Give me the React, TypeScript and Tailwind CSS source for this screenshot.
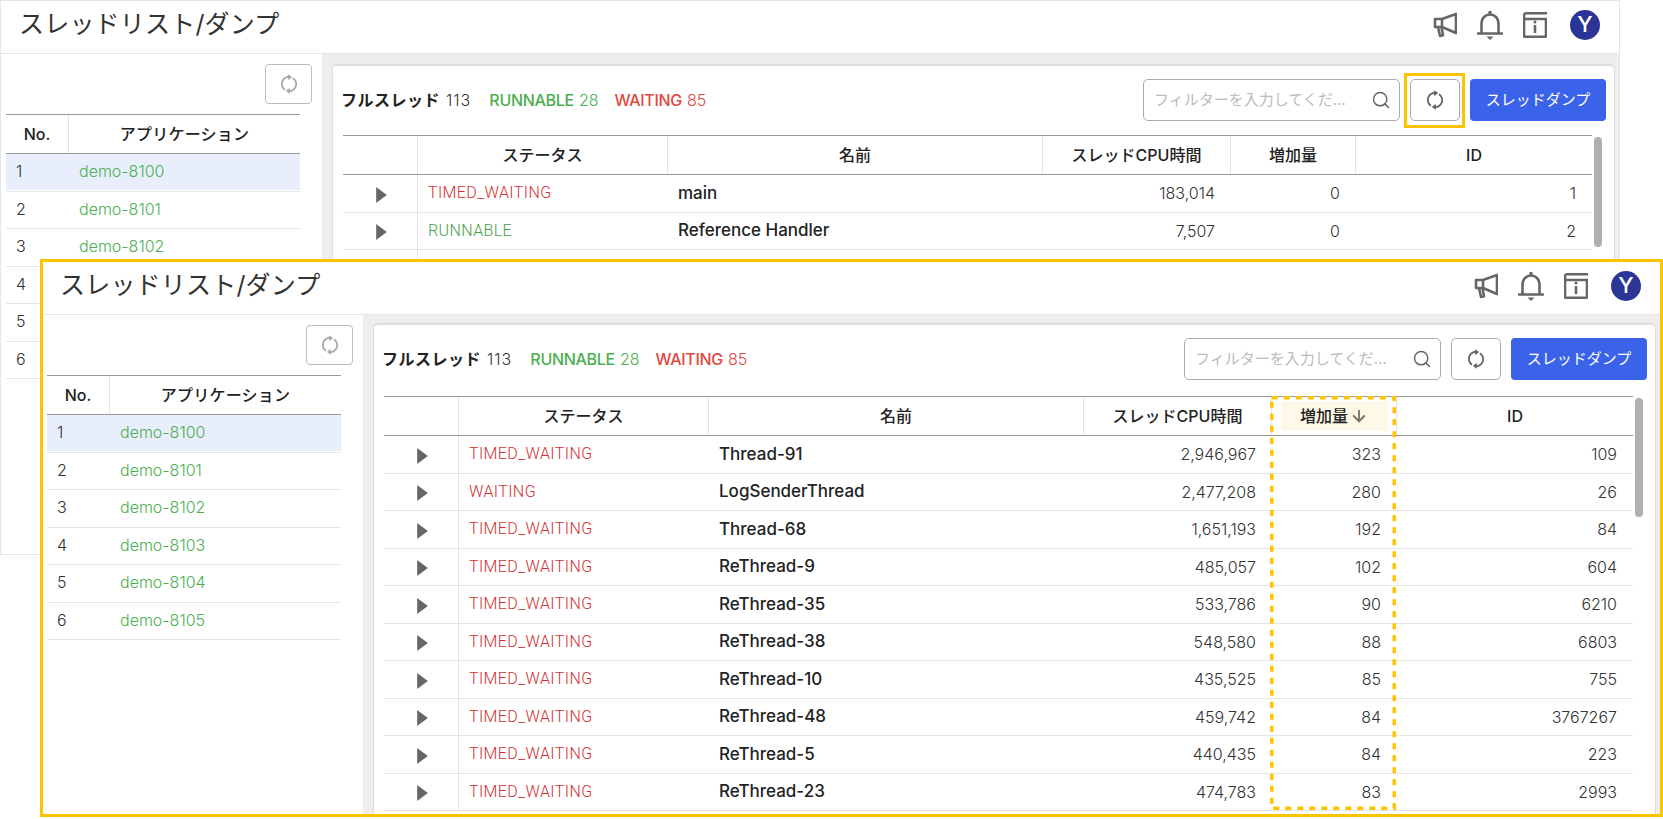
import { ArrowDown, Search } from 'lucide-react';

const FONT = "font-['Inter','Noto_Sans_CJK_JP',sans-serif]";

type Row = { status: string; name: string; cpu: string; delta: string; id: string };

const backRows: Row[] = [
  { status: 'TIMED_WAITING', name: 'main', cpu: '183,014', delta: '0', id: '1' },
  { status: 'RUNNABLE', name: 'Reference Handler', cpu: '7,507', delta: '0', id: '2' },
  { status: '', name: '', cpu: '', delta: '', id: '' },
];

const frontRows: Row[] = [
  { status: 'TIMED_WAITING', name: 'Thread-91', cpu: '2,946,967', delta: '323', id: '109' },
  { status: 'WAITING', name: 'LogSenderThread', cpu: '2,477,208', delta: '280', id: '26' },
  { status: 'TIMED_WAITING', name: 'Thread-68', cpu: '1,651,193', delta: '192', id: '84' },
  { status: 'TIMED_WAITING', name: 'ReThread-9', cpu: '485,057', delta: '102', id: '604' },
  { status: 'TIMED_WAITING', name: 'ReThread-35', cpu: '533,786', delta: '90', id: '6210' },
  { status: 'TIMED_WAITING', name: 'ReThread-38', cpu: '548,580', delta: '88', id: '6803' },
  { status: 'TIMED_WAITING', name: 'ReThread-10', cpu: '435,525', delta: '85', id: '755' },
  { status: 'TIMED_WAITING', name: 'ReThread-48', cpu: '459,742', delta: '84', id: '3767267' },
  { status: 'TIMED_WAITING', name: 'ReThread-5', cpu: '440,435', delta: '84', id: '223' },
  { status: 'TIMED_WAITING', name: 'ReThread-23', cpu: '474,783', delta: '83', id: '2993' },
];

const apps = ['demo-8100', 'demo-8101', 'demo-8102', 'demo-8103', 'demo-8104', 'demo-8105'];

function RefreshIcon({ className }: { className: string }) {
  return (
    <svg viewBox="0 0 24 24" fill="none" stroke="currentColor" strokeWidth="2.2" className={className}>
      <path d="M14.5 3.8A8.5 8.5 0 0 0 7.2 19" />
      <path d="M9.5 20.2A8.5 8.5 0 0 0 16.8 5" />
      <path d="M11.5 1l3.5 2.8-3.5 2.8z" fill="currentColor" strokeWidth="1" />
      <path d="M12.5 23L9 20.2l3.5-2.8z" fill="currentColor" strokeWidth="1" />
    </svg>
  );
}

function HeaderIcons() {
  return (
    <div className="flex items-center gap-[20px] text-[#666]">
      <svg viewBox="0 0 24 26" fill="none" stroke="currentColor" strokeWidth="2.6" className="w-[24px] h-[26px]">
        <path d="M23 2v19L9 15H2V7h7z" strokeLinejoin="round" />
        <path d="M9 7v8M5 15l2 9 3-.8-1.5-8" strokeLinejoin="round" />
      </svg>
      <svg viewBox="0 0 26 30" className="w-[26px] h-[30px]" fill="none" stroke="currentColor" strokeWidth="2.6">
        <path d="M1 23.5h24" strokeLinecap="round" />
        <path d="M4.5 23.5V13a8.500 8.500 0 0 1 17 0v10.500" />
        <circle cx="13" cy="2.500" r="1.800" fill="currentColor" stroke="none" />
        <path d="M9.500 26.500h7L13 30z" fill="currentColor" stroke="none" />
      </svg>
      <svg viewBox="0 0 24 26" fill="none" stroke="currentColor" strokeWidth="2.6" className="w-[24px] h-[26px]">
        <path d="M24 1.300H3a2 2 0 0 0-2 2v20.500a1 1 0 0 0 1 1h20a1 1 0 0 0 1-1V7H1" />
        <path d="M12 13v8" strokeWidth="2.600" />
        <circle cx="12" cy="10" r="1.500" fill="currentColor" stroke="none" />
      </svg>
      <div className="ml-[3px] w-[30px] h-[30px] rounded-full bg-[#2b3595] text-white flex items-center justify-center text-[22px] font-medium">
        Y
      </div>
    </div>
  );
}

function Sidebar() {
  return (
    <div className="w-[321px] shrink-0 bg-white pl-[5px]">
      <div className="flex justify-end pt-[10px] pr-[10px]">
        <button className="w-[47px] h-[40px] border border-[#bbb] rounded-[4px] flex items-center justify-center text-[#aaa]">
          <RefreshIcon className="w-[20px] h-[20px]" />
        </button>
      </div>
      <div className="w-[294px] mt-[10px]">
        <div className="grid grid-cols-[63px_231px] h-[40px] border-y border-[#999] text-[16px] font-medium text-[#222]">
          <div className="flex items-center justify-center border-r border-[#e5e5e5]">No.</div>
          <div className="flex items-center justify-center tracking-[0.2px]">アプリケーション</div>
        </div>
        {apps.map((app, i) => (
          <div key={app} className="h-[37.5px] border-b border-[#e5e5e5] text-[16px] font-light">
            <div className={`grid grid-cols-[63px_231px] items-center h-[36px] pb-[2px] ${i === 0 ? 'bg-[#e8eefb]' : ''}`}>
              <div className="pl-[10px] text-[#333]">{i + 1}</div>
              <div className="pl-[10px] text-[#4caf50]">{app}</div>
            </div>
          </div>
        ))}
      </div>
    </div>
  );
}

function ThreadTable({ rows, sorted }: { rows: Row[]; sorted: boolean }) {
  return (
    <div className={`flex items-start pl-[2px] ${sorted ? 'pt-[16px]' : 'pt-[14px]'}`}>
      <div className="w-[1249px] shrink-0">
        <div className="grid grid-cols-[75px_250px_375px_188px_125px_236px] h-[40px] border-y border-[#999] text-[16px] font-medium text-[#222]">
          <div className="border-r border-[#e5e5e5]" />
          <div className="flex items-center justify-center border-r border-[#e5e5e5]">ステータス</div>
          <div className="flex items-center justify-center border-r border-[#e5e5e5]">名前</div>
          <div className="flex items-center justify-center border-r border-[#e5e5e5]">スレッドCPU時間</div>
          <div className="flex items-center justify-center border-r border-[#e5e5e5]">
            {sorted ? (
              <div className="w-[107px] h-[30px] bg-[#fdf8e7] flex items-center justify-center gap-[2px]">
                増加量
                <ArrowDown className="w-[18px] h-[18px] text-[#776f5f]" strokeWidth={2.4} />
              </div>
            ) : (
              '増加量'
            )}
          </div>
          <div className="flex items-center justify-center">ID</div>
        </div>
        {rows.map((row, i) => (
          <div
            key={i}
            className="grid grid-cols-[75px_250px_375px_188px_125px_236px] items-center h-[37.5px] border-b border-[#e5e5e5] text-[16px] font-light text-[#333]"
          >
            <div className="h-full border-r border-[#e5e5e5] flex items-center justify-center pl-[2px]">
              {row.status && (
                <svg viewBox="0 0 10 15" className="mt-[3px] w-[11px] h-[16px] fill-[#666]">
                  <path d="M0 0l10 7.500L0 15z" />
                </svg>
              )}
            </div>
            <div
              className={`pl-[10px] tracking-[0.4px] font-['Roboto','Noto_Sans_CJK_JP',sans-serif] ${row.status === 'RUNNABLE' ? 'text-[#43a047]' : 'text-[#d32f2f]'}`}
            >
              {row.status}
            </div>
            <div className="pl-[10px] text-[17px] font-medium text-[#222]">{row.name}</div>
            <div className="pr-[16px] text-right">{row.cpu}</div>
            <div className="pr-[16px] text-right">{row.delta}</div>
            <div className="pr-[16px] text-right">{row.id}</div>
          </div>
        ))}
      </div>
      <div className={`ml-[2px] mt-[2px] w-[8px] rounded-full bg-[#b0b0b0] ${sorted ? 'h-[119px]' : 'h-[110px]'}`} />
    </div>
  );
}

function ThreadPage({ rows, sorted }: { rows: Row[]; sorted: boolean }) {
  return (
    <div className="w-[1620px] h-[555px] shrink-0 border border-[#e5e5e5] bg-white flex flex-col overflow-hidden">
      <div className="h-[53px] shrink-0 border-b border-[#e5e5e5] flex items-center justify-between pl-[18px] pr-[19px] pb-[5px]">
        <h1 className="text-[25px] tracking-[0.2px] font-normal text-[#333]">スレッドリスト/ダンプ</h1>
        <HeaderIcons />
      </div>
      <div className="flex flex-1 min-h-0">
        <Sidebar />
        <div className={`flex-1 min-w-0 bg-[#eee] pl-[10px] pr-[4px] ${sorted ? 'pt-[8px]' : 'pt-[10px]'}`}>
          <div className="h-full bg-white border border-[#ddd] border-t-2 rounded-t-[5px] pl-[8px] pr-[8px] pt-[13px]">
            <div className="flex items-center h-[42px] text-[16px]">
              <span className="font-bold tracking-[0.5px] text-[#222]">フルスレッド</span>
              <span className="ml-[6px] font-light tracking-[1px] text-[#333]">113</span>
              <span className="ml-[18px] font-medium tracking-[-0.3px] text-[#4caf50]">RUNNABLE</span>
              <span className="ml-[5px] font-light text-[#4caf50]">28</span>
              <span className="ml-[16px] font-medium tracking-[-0.3px] text-[#e0483f]">WAITING</span>
              <span className="ml-[5px] font-light text-[#e0483f]">85</span>
              <div className="ml-auto w-[257px] h-[42px] border border-[#aaa] rounded-[5px] flex items-center pr-[8px]">
                <input
                  placeholder="フィルターを入力してください"
                  className="flex-1 min-w-0 pl-[10px] pr-[14px] outline-none text-[15px] text-ellipsis placeholder:text-[#bbb]"
                />
                <Search className="w-[20px] h-[20px] text-[#666]" strokeWidth={1.8} />
              </div>
              <button className="ml-[10px] w-[50px] h-[42px] border border-[#aaa] rounded-[5px] flex items-center justify-center text-[#666]">
                <RefreshIcon className="w-[20px] h-[20px]" />
              </button>
              <button className="ml-[10px] w-[136px] h-[42px] rounded-[4px] bg-[#3b63ea] text-white text-[15px]">
                スレッドダンプ
              </button>
            </div>
            <ThreadTable rows={rows} sorted={sorted} />
          </div>
        </div>
      </div>
    </div>
  );
}

export default function App() {
  return (
    <div className={`relative w-[1663px] h-[819px] bg-white overflow-hidden ${FONT}`}>
      <ThreadPage rows={backRows} sorted={false} />
      <div className="absolute left-[1404px] top-[73px] w-[61px] h-[55px] border-[3px] border-[#ffc400]" />
      <div className="absolute left-[40px] top-[259px] w-[1623px] h-[558px] border-[3px] border-[#ffc400] bg-white overflow-hidden">
        <div className="-ml-[2px] -mt-[1px]">
          <ThreadPage rows={frontRows} sorted />
        </div>
        <svg viewBox="0 0 126 414" className="absolute left-[1227px] top-[134px] w-[126px] h-[414px]" fill="none">
          <rect x="1.750" y="1.750" width="122.500" height="410.500" stroke="#ffc400" strokeWidth="3.500" strokeDasharray="6 6" />
        </svg>
      </div>
    </div>
  );
}
